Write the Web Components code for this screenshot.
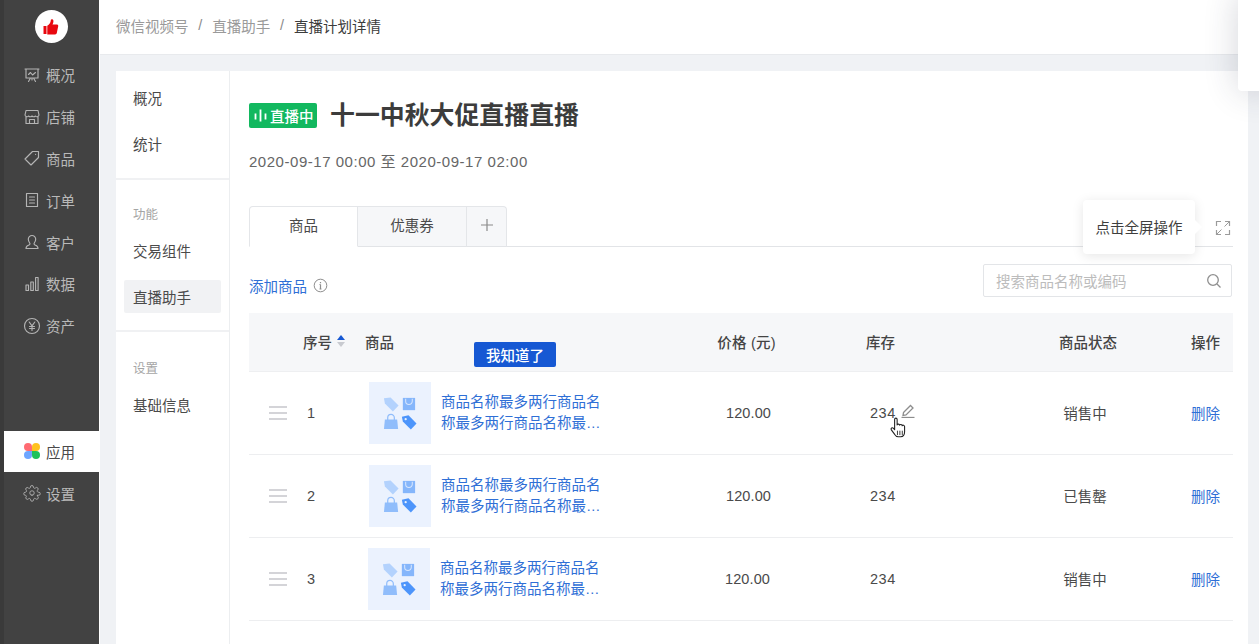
<!DOCTYPE html>
<html lang="zh-CN">
<head>
<meta charset="utf-8">
<title>直播计划详情</title>
<style>
html,body{margin:0;padding:0;height:644px;overflow:hidden;background:#f0f2f5;font-family:"Liberation Sans","Noto Sans CJK SC",sans-serif;font-size:14.5px;color:#454545}
</style>
</head>
<body>
<app-shell>
  <side-bar slot="side">
    <nav-item icon="screen">概况</nav-item>
    <nav-item icon="store">店铺</nav-item>
    <nav-item icon="tag">商品</nav-item>
    <nav-item icon="order">订单</nav-item>
    <nav-item icon="user">客户</nav-item>
    <nav-item icon="bars">数据</nav-item>
    <nav-item icon="yen">资产</nav-item>
    <nav-item slot="bottom" icon="apps" active>应用</nav-item>
    <nav-item slot="bottom" icon="gear">设置</nav-item>
  </side-bar>
  <top-bar slot="top">
    <span>微信视频号</span><span>直播助手</span><span data-current>直播计划详情</span>
  </top-bar>
  <sub-nav slot="sub">
    <sub-item>概况</sub-item>
    <sub-item>统计</sub-item>
    <sub-group label="功能">
      <sub-item>交易组件</sub-item>
      <sub-item active>直播助手</sub-item>
    </sub-group>
    <sub-group label="设置">
      <sub-item>基础信息</sub-item>
    </sub-group>
  </sub-nav>
  <live-head slot="main" title-text="十一中秋大促直播直播" time="2020-09-17 00:00 至 2020-09-17 02:00"></live-head>
  <tab-strip slot="main"></tab-strip>
  <tool-row slot="main"></tool-row>
  <product-table slot="main">
    <product-row seq="1" stock="234" status="销售中" editable></product-row>
    <product-row seq="2" stock="234" status="已售罄"></product-row>
    <product-row seq="3" stock="234" status="销售中" nudge></product-row>
  </product-table>
</app-shell>
<script>
const ICONS={
screen:'<path d="M2 3h14M3 3v9h12V3M9 12v2M5.500 15.500 7.500 12M12.500 15.500 10.500 12M5.500 8.500 7.500 6.500 9.500 9 12.500 6.500"/>',
store:'<path d="M3 2.500h12l1 4.500a2 2 0 0 1-3.500 1 2.400 2.400 0 0 1-3.500 0 2.400 2.400 0 0 1-3.500 0A2 2 0 0 1 2 7zM3 9v6.500h12V9M6.500 15.500V11.500h5v4"/>',
tag:'<path d="M9.500 2.500h6v6l-7.500 7.500-6-6zM12.600 5.400h.01"/>',
order:'<path d="M3.500 2.500h11v13h-11zM6.500 6h5M6.500 9h5M6.500 12h5"/>',
user:'<path d="M9 2.500a3.700 3.700 0 0 1 3.700 3.800c0 2-1 3.200-1.700 4.200 0 1 .6 1.500 1.500 1.800 1.500.5 2.500 1 2.500 3.200H3c0-2.200 1-2.700 2.500-3.200.9-.3 1.500-.8 1.500-1.800-.7-1-1.700-2.200-1.700-4.200A3.700 3.700 0 0 1 9 2.500z"/>',
bars:'<path d="M3 10h2.500v5.500H3zM7.800 7h2.500v8.500H7.800zM12.600 2.500h2.500v13h-2.500z"/>',
yen:'<circle cx="9" cy="9" r="7.500"/><path d="M6.200 5 9 8.800 11.800 5M9 8.800V13.500M6.500 9.500h5M6.500 11.500h5"/>',
gear:'<g transform="scale(.75)"><path d="M12 15a3 3 0 1 0 0-6 3 3 0 0 0 0 6z"/><path d="M19.400 15a1.650 1.650 0 0 0 .33 1.820l.06.06a2 2 0 1 1-2.830 2.830l-.06-.06a1.650 1.650 0 0 0-2.820 1.170V21a2 2 0 1 1-4 0v-.09a1.650 1.650 0 0 0-2.820-1.120l-.06.06a2 2 0 1 1-2.830-2.830l.06-.06A1.650 1.650 0 0 0 3.090 15H3a2 2 0 1 1 0-4h.09a1.650 1.650 0 0 0 1.170-2.820l-.06-.06a2 2 0 1 1 2.830-2.830l.06.06A1.650 1.650 0 0 0 9.910 4.180V4a2 2 0 1 1 4 0v.09a1.650 1.650 0 0 0 2.820 1.170l.06-.06a2 2 0 1 1 2.830 2.830l-.06.06A1.650 1.650 0 0 0 20.910 11H21a2 2 0 1 1 0 4h-.09a1.650 1.650 0 0 0-1.510 0z"/></g>'
};
function def(name,css,html,extra){
  customElements.define(name,class extends HTMLElement{
    constructor(){super();const r=this.attachShadow({mode:'open'});r.innerHTML='<style>'+css+'</style>'+(typeof html==='function'?'':html);}
    connectedCallback(){if(typeof html==='function'){const d=document.createElement('template');d.innerHTML=html(this);this.shadowRoot.append(d.content);}if(extra)extra(this);}
  });
}
def('app-shell',`
:host{display:grid;grid-template-columns:100px 1fr;width:1259px;height:644px;overflow:hidden;position:relative}
.right{display:flex;flex-direction:column;min-width:0;height:644px}
.body{display:flex;flex:1;padding:16px 11px 0 16px;min-height:0}
.card{display:flex;flex:1;background:#fff;min-width:0}
.main{flex:1;min-width:0;padding:0 15px 0 19px;box-sizing:border-box;position:relative}
.popup{position:absolute;left:1238px;top:-6px;width:40px;height:97px;background:#fff;border-radius:4px;box-shadow:0 0 34px rgba(40,45,70,.2)}
`,`
<slot name="side"></slot>
<div class="right"><slot name="top"></slot>
  <div class="body"><div class="card"><slot name="sub"></slot><div class="main"><slot name="main"></slot></div></div></div>
</div>
<div class="popup"></div>`);
def('side-bar',`
:host{display:flex;flex-direction:column;box-sizing:border-box;height:644px;background:#424242;border-left:4px solid #3a3a3a;border-right:1px solid #fff}
.logo{height:54px;display:flex;align-items:center;justify-content:center;padding:0 1px 1px 0;box-sizing:border-box}
.disc{width:33px;height:33px;border-radius:50%;background:#fff;display:flex;align-items:center;justify-content:center}
.low{margin-top:84px}
`,`
<div class="logo"><div class="disc"><svg width="20" height="20" viewBox="0 0 20 20"><path fill="#e8080f" d="M2.500 9h3v8h-3zM6.300 8.800c2-1 3.300-2.700 3.600-6 .1-.8 2.300-.8 2.500 1 .2 1.300-.4 2.700-.9 3.700h4.500c1 0 1.400 1 1.200 1.800l-1.400 6.800c-.2.900-.8 1.400-1.700 1.400H6.300z"/></svg></div></div>
<div><slot></slot></div><div class="low"><slot name="bottom"></slot></div>`);
def('nav-item',`
:host{display:flex;align-items:center;height:41.8px;box-sizing:border-box;padding-left:19px;gap:5px;color:#b9b9b9;font-size:14.5px}
:host([active]){background:#fff;color:#4a4a4a}
svg{width:18px;height:18px;flex:none;fill:none;stroke:#b4b4b4;stroke-width:1.150;stroke-linejoin:round;stroke-linecap:round}
`,h=>{const n=h.getAttribute('icon');
 if(n==='apps')return '<svg viewBox="0 0 18 18" style="stroke:none"><path fill="#ff6b72" d="M5 1a4 4 0 0 1 4 4v4H5A4 4 0 0 1 5 1z"/><path fill="#ffc21f" d="M13 1a4 4 0 0 1 0 8H9V5a4 4 0 0 1 4-4z"/><path fill="#6ea6ff" d="M5 17a4 4 0 0 1 0-8h4v4a4 4 0 0 1-4 4z"/><path fill="#1fc25b" d="M13 17a4 4 0 0 1-4-4V9h4a4 4 0 0 1 0 8z"/></svg><slot></slot>';
 return '<svg viewBox="0 0 18 18">'+ICONS[n]+'</svg><slot></slot>';});
def('top-bar',`
:host{display:flex;align-items:center;height:55px;flex:none;box-sizing:border-box;background:#fff;border-bottom:1px solid #e8eaed;padding:0 0 4px 16px;color:#9a9a9a;font-size:14.5px}
`,'<slot></slot>',h=>{
 const sp=[...h.children];
 sp.forEach((s,i)=>{if(s.hasAttribute('data-current')){s.style.color='#3c3c3c';}
  if(i<sp.length-1){const d=document.createElement('span');d.textContent='/';d.style.cssText='margin:0 9px 0 9.800px;color:#8c8c8c;width:5px';s.after(d);}});
});
def('sub-nav',`
:host{display:block;width:114px;flex:none;box-sizing:border-box;border-right:1px solid #eceef0;padding-top:9.500px}
.wrap{padding:0 8px}
`,'<div class="wrap"><slot></slot></div>');
def('sub-item',`
:host{display:flex;align-items:center;height:33px;margin-bottom:13px;padding-left:9px;border-radius:2px;box-sizing:border-box;color:#4a4a4a;font-size:14.5px;width:97px}
:host([active]){background:#f1f2f4}
`,'<slot></slot>');
def('sub-group',`
:host{display:block;margin:18.500px -8px 0;padding:27px 8px 0;border-top:2px solid #f0f1f3}
:host(:last-child){margin-top:17px;padding-top:29px}
.l{font-size:12.500px;color:#a5a5a5;padding-left:9px;height:16px;line-height:16px;margin-bottom:11px}
`,h=>`<div class="l">${h.getAttribute('label')}</div><slot></slot>`);
def('live-head',`
:host{display:block;padding-top:32px}
.t{display:flex;align-items:center;height:25px;gap:13px}
.b{display:flex;align-items:center;box-sizing:border-box;width:68px;height:25px;background:#12b85f;border-radius:2px;color:#fff;font-size:14.500px;font-weight:500;padding-left:5px;gap:3px}
h1{margin:0;font-size:24.900px;font-weight:600;color:#3c3c3c;line-height:25px;white-space:nowrap}
.time{margin-top:21px;font-size:15px;line-height:26px;height:26px;color:#666;letter-spacing:.53px;white-space:nowrap}
`,h=>`<div class="t"><span class="b"><svg width="13" height="15" viewBox="0 0 13 15"><path stroke="#fff" stroke-width="1.800" fill="none" d="M1.500 5.500v6M6.500 1.500v12M11.500 5.500v6"/></svg>直播中</span><h1>${h.getAttribute('title-text')}</h1></div><div class="time">${h.getAttribute('time')}</div>`);
def('tab-strip',`
:host{display:flex;align-items:flex-end;height:41px;margin-top:31px;box-sizing:border-box;border-bottom:1px solid #e2e4e7;position:relative}
.t{height:41px;margin-bottom:-1px;padding-bottom:4px;box-sizing:border-box;border:1px solid #e4e6e9;border-left:0;border-bottom:1px solid #e2e4e7;background:#f6f7f9;display:flex;align-items:center;justify-content:center;width:109px;color:#4a4a4a;font-size:14.500px}
.t.on{background:#fff;border-left:1px solid #e4e6e9;border-bottom-color:#fff;border-radius:4px 0 0 0}
.t.p{width:40px;border-radius:0 4px 0 0}
.fs{position:absolute;right:2px;top:14px;width:16px;height:16px}
.tip{position:absolute;left:834px;top:-6px;width:112px;height:54px;padding-bottom:2px;box-sizing:border-box;background:#fff;border-radius:4px;box-shadow:0 2px 12px rgba(0,0,0,.1);display:flex;align-items:center;justify-content:center;color:#3e3e3e;font-size:14.500px;z-index:2}
.tip::after{content:"";position:absolute;right:-5px;top:22px;width:10px;height:10px;background:#fff;transform:rotate(45deg)}
`,`
<div class="t on">商品</div><div class="t">优惠券</div>
<div class="t p"><svg width="14" height="14" viewBox="0 0 14 14"><path stroke="#8a8a8a" stroke-width="1.200" d="M7 1v12M1 7h12"/></svg></div>
<div class="tip">点击全屏操作</div>
<svg class="fs" viewBox="0 0 16 16" fill="none" stroke="#9b9b9b" stroke-width="1.200"><path d="M6 1.500H1.500V6M10 1.500h4.500V6M1.500 10v4.500H6M14.500 10v4.500H10"/><path d="M9.500 6.500 14 2M6.500 9.500 2 14" stroke-width="1"/></svg>`);
def('tool-row',`
:host{display:flex;align-items:center;justify-content:space-between;margin-top:17px;height:33px;padding-right:1px}
.add{display:flex;align-items:center;gap:6px;color:#2f6fd6;font-size:14.500px;padding-top:10px}
.s{display:flex;align-items:center;justify-content:space-between;width:249px;height:33px;box-sizing:border-box;border:1px solid #e3e5e8;border-radius:2px;padding:0 9px 0 12px;color:#bcbcbc;font-size:14.500px}
`,`
<div class="add">添加商品<svg width="15" height="15" viewBox="0 0 15 15" fill="none" stroke="#8e8e8e"><circle cx="7.500" cy="7.500" r="6.300"/><path stroke-width="1.200" d="M7.500 6.500v4.500M7.500 4v1.300M6.500 11h2M6.500 6.500h1"/></svg></div>
<div class="s">搜索商品名称或编码<svg width="16" height="16" viewBox="0 0 16 16" fill="none" stroke="#8f8f8f" stroke-width="1.300"><circle cx="7" cy="7" r="5.300"/><path d="m11 11 3.500 3.500"/></svg></div>`);
const COLS='54px 62px 352px 149px 193px 132px 42px';
def('product-table',`
:host{display:block;margin-top:16px;position:relative;--cols:${COLS}}
.h{display:grid;grid-template-columns:var(--cols);align-items:center;height:56px;padding-bottom:2px;background:#f6f7f9;border-bottom:1px solid #eeeff1;font-weight:500;color:#444;font-size:14.500px}
.sort{display:flex;align-items:center;gap:4px}
.p{width:59px;text-align:center;white-space:nowrap;letter-spacing:.2px}
.st{width:58px;text-align:center;white-space:nowrap}
.know{position:absolute;left:225px;top:29px;width:82px;height:25px;background:#1658d3;border-radius:2px;color:#fff;display:flex;align-items:center;justify-content:center;font-size:14.500px;font-weight:500}
`,`
<div class="h"><span></span>
 <span class="sort">序号<svg width="10" height="14" viewBox="0 0 10 14"><path fill="#1658d3" d="M5 1 9 6H1z"/><path fill="#c8cad0" d="M5 13 1 8h8z"/></svg></span>
 <span>商品</span><span class="p">价格 (元)</span><span>库存</span><span class="st">商品状态</span><span>操作</span></div>
<slot></slot>
<div class="know">我知道了</div>`);
def('product-thumb',`
:host{display:flex;width:62px;height:62px;background:#ebf2fe;align-items:center;justify-content:center;flex:none}
`,`<svg width="34" height="34" viewBox="0 0 36 36">
<path fill="#b3d2fd" d="M1 2.500 8 1.500l8.500 8.500-6 6.500L2 8z"/>
<path fill="#85b6fb" d="M21 2h13v13H21z"/><path fill="none" stroke="#d7e6fd" stroke-width="1.100" d="M24 3v2.500a3.500 3.500 0 0 0 7 0V3"/>
<path fill="#90bdfb" d="M2 25h13l1 10H1z"/><path fill="none" stroke="#90bdfb" stroke-width="1.300" d="M5 26v-3a3.500 3.500 0 0 1 7 0v3"/>
<path fill="#4d95fb" d="m20 22 7-1.500 8.500 8.500-6 6.500-8.500-8.500z"/><circle cx="24" cy="24.500" r="1.200" fill="#ebf2fe"/>
</svg>`);
def('product-row',`
:host{display:grid;grid-template-columns:var(--cols);align-items:center;height:83px;box-sizing:border-box;border-bottom:1px solid #edeef0;color:#4a4a4a;font-size:14.500px;position:relative}
.drag{padding-left:20px;display:flex}
.seq{padding-left:4px}
.prod{display:flex;align-items:center;gap:10px;padding-left:4px}
:host([nudge]) .prod{margin-left:-1px}
:host([nudge]) .price{padding-left:1px}
.name{width:161px;color:#2f6fd6;line-height:21px}
.price{width:59px;text-align:center;padding-left:2px;letter-spacing:.1px;box-sizing:content-box}
.stock{padding-left:4px;display:flex;align-items:center;gap:5px;position:relative;letter-spacing:.5px}
.st{width:58px;text-align:center;margin-left:-3px;padding-bottom:1px}
.del{color:#2f6fd6;padding-bottom:2px}
.pen{margin-bottom:6px}
.hand{position:absolute;left:23px;top:14px;width:20px;height:23px}
`,h=>{
 const ed=h.hasAttribute('editable');
 return `<div class="drag"><svg width="18" height="14" viewBox="0 0 18 14"><path stroke="#c6c6cb" stroke-width="1.600" d="M0 1h18M0 7h18M0 13h18"/></svg></div>
 <div class="seq">${h.getAttribute('seq')}</div>
 <div class="prod"><product-thumb></product-thumb><div class="name">商品名称最多两行商品名称最多两行商品名称最…</div></div>
 <div class="price">120.00</div>
 <div class="stock">${h.getAttribute('stock')}${ed?`<svg class="pen" width="15" height="15" viewBox="0 0 15 15" fill="none" stroke="#8d8d8d" stroke-width="1.300"><path d="M2.500 9.500 9.500 2.500l2.500 2.500-7 7-3 .5z"/><path d="M.5 14.500h13"/></svg>
 <svg class="hand" viewBox="0 0 18 21"><path fill="#fff" stroke="#222" stroke-width="1" stroke-linejoin="round" d="M5 2.200c0-1.600 2.300-1.600 2.300 0v5c.2-1 2.200-1 2.300.3.300-1 2.200-.9 2.300.4.400-.8 2.100-.6 2.200.8v4.800c0 2.500-1.300 4.500-3.500 4.500H8.200c-1.700 0-2.500-1-3.300-2.300L2 11.800c-.9-1.500.9-2.700 2-1.400l1 1.200z"/><path stroke="#222" stroke-width=".8" d="M7.600 12.500v4M9.800 12.500v4M12 12.500v4"/></svg>`:''}</div>
 <div class="st">${h.getAttribute('status')}</div>
 <div class="del">删除</div>`;});
</script>
</body>
</html>
